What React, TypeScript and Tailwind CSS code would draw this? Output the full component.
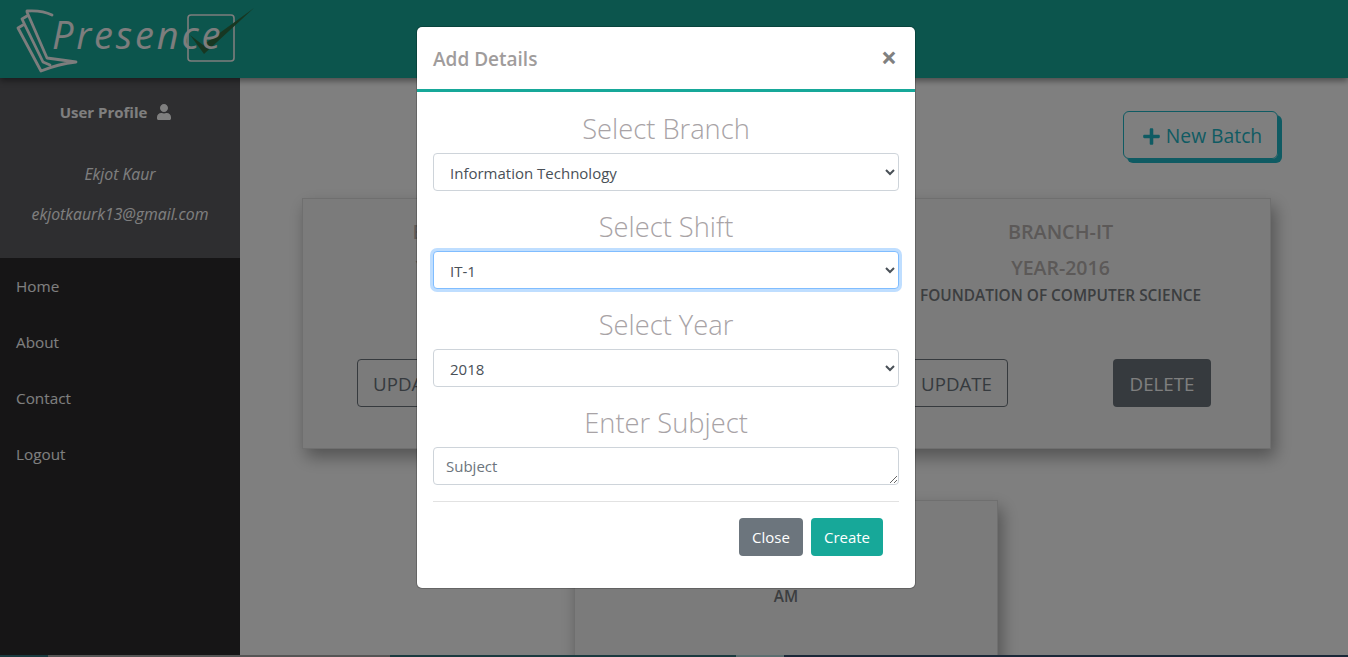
import { FaPlus, FaUser } from "react-icons/fa";

const navItems = ["Home", "About", "Contact", "Logout"];

const batches = [
  { branch: "BRANCH-IT", year: "YEAR-2018", subject: "DBMS", width: "w-[326px]" },
  { branch: "BRANCH-IT", year: "YEAR-2016", subject: "FOUNDATION OF COMPUTER SCIENCE", width: "w-[421px]" },
];

const Logo = () => (
  <div className="relative h-[78px] w-[260px]">
    <svg className="absolute inset-0" width="260" height="78" viewBox="0 0 260 78" fill="none">
      <g stroke="#fafafa" strokeWidth="2.8" strokeLinejoin="round" strokeLinecap="round">
        <path d="M27 12 L47 58 Q62 60 76 62 Q58 64 41 71 L18 28 L23 25" />
        <path d="M22 19 L43 62 L50 65 M22 19 L27 16" />
        <path d="M27 11 Q42 10 52 15" />
      </g>
      <rect x="188" y="15" width="46" height="46" rx="3" stroke="#fafafa" strokeWidth="1.6" />
      <path d="M190 35 L203 45 L254 8 L204 54 Z" fill="#2f6f45" />
    </svg>
    <span className="absolute left-[52px] top-[9px] text-[38px] font-normal italic leading-[50px] tracking-[2.8px] text-[#fafafa]">
      Presence
    </span>
  </div>
);

const Sidebar = () => (
  <aside className="flex w-[240px] shrink-0 flex-col bg-[#2c2a2c]">
    <div className="flex h-[180px] flex-col items-center bg-[#5c5c60] text-white">
      <div className="mt-[23px] flex h-[22px] items-center gap-[10px] pr-[9px] text-[15px] font-bold">
        User Profile <FaUser className="h-[16px] w-[14px]" />
      </div>
      <p className="mt-[39px] text-[15.8px] italic leading-[24px]">Ekjot Kaur</p>
      <p className="mt-[16px] text-[15.8px] italic leading-[24px]">ekjotkaurk13@gmail.com</p>
    </div>
    <nav className="flex flex-col pt-[16px]">
      {navItems.map((item) => (
        <a key={item} className="flex h-[56px] items-start px-4 text-[15.3px] leading-6 text-white">
          {item}
        </a>
      ))}
    </nav>
  </aside>
);

const BatchColumn = ({ branch, year, subject, width }: (typeof batches)[number]) => (
  <div className={`flex ${width} flex-col items-center pt-[19px]`}>
    <h4 className="text-[19.8px] font-semibold leading-[30px] text-[#b8b2b0]">{branch}</h4>
    <h4 className="mt-[6px] text-[19.5px] font-semibold leading-[30px] text-[#b8b2b0]">{year}</h4>
    <p className="mt-px text-[15.4px] font-semibold leading-[24px] text-[#787c80]">{subject}</p>
    <div className="mt-[51px] flex w-full items-center justify-between pl-[55px] pr-[60px]">
      <button className="h-[48px] w-[103px] rounded-[4px] border border-[#6c757d] pt-[2px] text-[18.7px] text-[#6c757d]">
        UPDATE
      </button>
      <button className="h-[48px] w-[98px] rounded-[4px] bg-[#6c757d] pt-[2px] text-[18.7px] text-white">DELETE</button>
    </div>
  </div>
);

const SelectField = ({
  label,
  options,
  focused,
}: {
  label: string;
  options: string[];
  focused?: boolean;
}) => (
  <div>
    <h3 className="mb-[6px] mt-[18px] text-center text-[27.3px] font-light leading-[36px] text-[#a8a3a6]">{label}</h3>
    <select
      defaultValue={options[0]}
      className={
        focused
          ? "h-[38px] w-full rounded-[4px] border border-[#80bdff] bg-white px-3 pt-[2px] text-[15px] text-[#495057] shadow-[0_0_0_3px_rgba(0,123,255,0.25)] outline-none"
          : "h-[38px] w-full rounded-[4px] border border-[#ced4da] bg-white px-3 pt-[2px] text-[15px] text-[#495057] outline-none"
      }
    >
      {options.map((o) => (
        <option key={o}>{o}</option>
      ))}
    </select>
  </div>
);

const AddDetailsModal = () => (
  <div className="absolute inset-0 z-30 flex justify-center pr-4">
    <div className="mt-[27px] h-[561px] w-[498px] rounded-[5px] bg-white ring-1 ring-black/20">
      <div className="flex h-[65px] items-center justify-between border-b-[3px] border-[#17a899] px-4">
        <h5 className="pt-[2px] text-[19px] font-semibold text-[#a09c9c]">Add Details</h5>
        <span className="mb-[3px] mr-[2px] text-[28px] font-bold leading-none text-[#808080]">×</span>
      </div>
      <div className="px-4 pt-px">
        <SelectField label="Select Branch" options={["Information Technology"]} />
        <SelectField label="Select Shift" options={["IT-1"]} focused />
        <SelectField label="Select Year" options={["2018"]} />
        <h3 className="mb-[6px] mt-[18px] text-center text-[27.3px] font-light leading-[36px] text-[#a8a3a6]">
          Enter Subject
        </h3>
        <textarea
          rows={1}
          placeholder="Subject"
          className="block h-[38px] w-full rounded-[4px] border border-[#ced4da] bg-white px-3 py-1.5 text-[15px] leading-6 text-[#495057] outline-none placeholder:text-[#6c757d]"
        />
        <div className="mt-[16px] flex justify-end gap-2 border-t border-[#e2e2e2] pr-4 pt-4">
          <button className="h-[38px] w-[64px] rounded-[4px] bg-[#6c757d] text-[15px] text-white">Close</button>
          <button className="h-[38px] w-[72px] rounded-[4px] bg-[#17a899] text-[15px] text-white">Create</button>
        </div>
      </div>
    </div>
  </div>
);

export default function App() {
  return (
    <div className="relative flex h-[657px] w-full flex-col overflow-hidden bg-white font-['Open_Sans',sans-serif]">
      <header className="relative z-10 h-[78px] shrink-0 bg-[#18ab9a] shadow-[0_3px_6px_rgba(0,0,0,0.4)]">
        <Logo />
      </header>
      <div className="flex min-h-0 flex-1">
        <Sidebar />
        <main className="min-w-0 flex-1">
          <div className="flex justify-end pr-[70px] pt-[33px]">
            <button className="flex h-[48px] w-[155px] items-center justify-center gap-[5px] rounded-[6px] border border-[#1eb6c6] pl-[3px] pt-[3px] text-[19.3px] text-[#1eb6c6] shadow-[4px_4px_0_#1eb6c6]">
              <FaPlus className="mb-px h-[19px] w-[19px]" /> New Batch
            </button>
          </div>
          <section className="ml-[62px] mt-[39px] flex h-[251px] w-[969px] justify-between bg-[#f7f7f7] shadow-[4px_8px_16px_rgba(0,0,0,0.35)] ring-1 ring-inset ring-[#dedede]">
            {batches.map((b) => (
              <BatchColumn key={b.year} {...b} />
            ))}
          </section>
          <section className="ml-[334px] mt-[51px] h-[200px] w-[424px] bg-[#f7f7f7] pt-[85px] text-center shadow-[4px_8px_16px_rgba(0,0,0,0.35)] ring-1 ring-inset ring-[#dedede]">
            <p className="text-[15.4px] font-semibold leading-[24px] text-[#787c80]">AM</p>
          </section>
        </main>
      </div>
      <div className="flex h-[2px] shrink-0">
        <div className="w-[48px] bg-[#34747f]" />
        <div className="w-[342px] bg-[#aaaaaa]" />
        <div className="w-[346px] bg-[#34747f]" />
        <div className="w-[48px] bg-[#b8dce0]" />
        <div className="flex-1 bg-[#345070]" />
      </div>
      <div className="absolute inset-0 z-20 bg-black/50" />
      <AddDetailsModal />
    </div>
  );
}
